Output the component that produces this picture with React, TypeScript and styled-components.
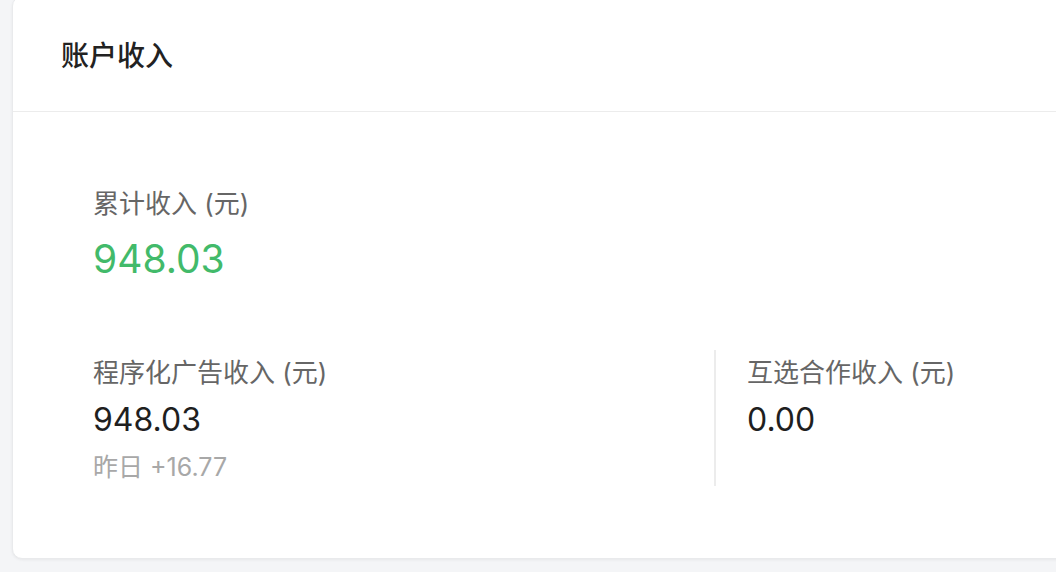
import React from 'react'
import styled, { createGlobalStyle } from 'styled-components'

const GlobalStyle = createGlobalStyle`
  html, body {
    margin: 0;
    padding: 0;
    background: #f4f5f7;
    overflow: hidden;
  }
  body {
    font-family: Inter, "Noto Sans CJK SC", "Noto Sans", sans-serif;
    -webkit-font-smoothing: antialiased;
  }
`

const Page = styled.div`
  width: 1056px;
  height: 572px;
  padding-left: 12px;
  box-sizing: border-box;
  overflow: hidden;
`

const Card = styled.section`
  width: 1404px;
  height: 563px;
  margin-top: -4px;
  box-sizing: border-box;
  background: #fff;
  border: 1px solid #e9eaec;
  border-radius: 10px;
  box-shadow: 0 1px 3px rgba(0, 0, 0, 0.06);
`

const Header = styled.header`
  height: 115px;
  box-sizing: border-box;
  display: flex;
  align-items: center;
  padding: 4px 0 0 48px;
  border-bottom: 1px solid #ececec;
`

const Title = styled.h2`
  margin: 0;
  font-size: 28px;
  line-height: 36px;
  font-weight: 500;
  color: #222;
`

const Body = styled.div`
  padding: 74px 80px 0;
`

const Label = styled.div`
  font-size: 26px;
  line-height: 36px;
  color: #666;
  white-space: nowrap;
`

const Total = styled.div`
  margin-top: 12px;
  font-size: 39px;
  line-height: 50px;
  font-weight: 400;
  color: #42ba6a;
`

const Row = styled.div`
  display: flex;
  margin-top: 66px;
`

const Column = styled.div<{ divided?: boolean }>`
  width: 621px;
  height: 136px;
  box-sizing: border-box;
  padding-top: 5px;
  ${({ divided }) => divided && `
    border-left: 2px solid #ececec;
    padding-left: 31px;
  `}
`

const Amount = styled.div`
  margin-top: 7px;
  font-size: 32px;
  line-height: 44px;
  color: #1f1f1f;
`

const Delta = styled.div`
  margin-top: 8px;
  font-size: 25px;
  line-height: 34px;
  color: #a8a8a8;
`

export default function App() {
  return (
    <>
      <GlobalStyle />
      <Page>
        <Card>
          <Header>
            <Title>账户收入</Title>
          </Header>
          <Body>
            <Label>累计收入 (元)</Label>
            <Total>948.03</Total>
            <Row>
              <Column>
                <Label>程序化广告收入 (元)</Label>
                <Amount>948.03</Amount>
                <Delta>昨日 +16.77</Delta>
              </Column>
              <Column divided>
                <Label>互选合作收入 (元)</Label>
                <Amount>0.00</Amount>
              </Column>
            </Row>
          </Body>
        </Card>
      </Page>
    </>
  )
}
